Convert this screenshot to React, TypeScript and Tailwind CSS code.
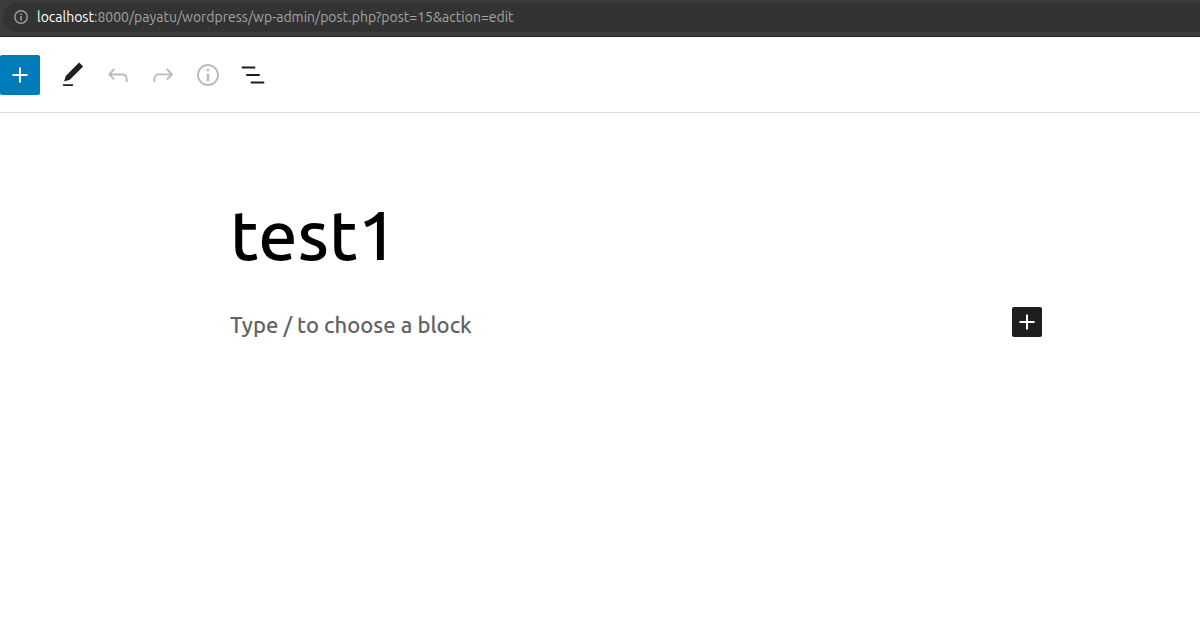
import type { ReactNode } from "react";

const PLUS = "M18 11.2h-5.2V6h-1.6v5.2H6v1.6h5.2V18h1.6v-5.2H18z";
const PENCIL =
  "M20.1 5.1L16.9 2 6.2 12.7l-1.3 4.4 4.5-1.3 10.7-10.7zM4 20.8h8v-1.5H4v1.5z";
const UNDO =
  "M18.3 11.7c-.6-.6-1.4-.9-2.3-.9H6.7l2.9-3.3-1.1-1-4.5 5L8.5 16l1-1-2.7-2.7H16c.5 0 .9.2 1.3.5 1 1 1 3.4 1 4.5v.3h1.5v-.2c0-1.5 0-4.3-1.5-5.7z";
const REDO =
  "M15.6 6.5l-1.1 1 2.9 3.3H8c-.9 0-1.7.3-2.3.9-1.4 1.5-1.4 4.2-1.4 5.6v.2h1.5v-.3c0-1.1 0-3.5 1-4.5.3-.3.7-.5 1.3-.5h9.2L14.5 15l1.1 1.1 4.6-4.6-4.6-5z";
const INFO =
  "M12 3.2c-4.8 0-8.8 3.9-8.8 8.8 0 4.8 3.9 8.8 8.8 8.8 4.8 0 8.8-3.9 8.8-8.8 0-4.8-4-8.8-8.8-8.8zm0 16c-4 0-7.2-3.3-7.2-7.2C4.8 8 8 4.8 12 4.8s7.2 3.3 7.2 7.2c0 4-3.2 7.2-7.2 7.2zM11 17h2v-6h-2v6zm0-8h2V7h-2v2z";
const LIST =
  "M13.8 5.2H3v1.5h10.8V5.2zm-3.6 12v1.5H21v-1.5H10.2zm7.2-6H6.6v1.5h10.8v-1.5z";

function Icon({ path }: { path: string }) {
  return (
    <svg viewBox="0 0 24 24" className="size-[30px]" fill="currentColor" aria-hidden="true">
      <path d={path} />
    </svg>
  );
}

function ToolButton({ label, disabled, children }: { label: string; disabled?: boolean; children: ReactNode }) {
  return (
    <button
      type="button"
      aria-label={label}
      disabled={disabled}
      className="flex h-10 w-[45px] items-center justify-center text-[#1e1e1e] disabled:text-[#bbbbbb]"
    >
      {children}
    </button>
  );
}

function AddressBar() {
  return (
    <div className="border-b border-[#202124] bg-[#3c3c3c] pt-0.5 pb-1 pl-[3px]">
      <div className="flex h-[30px] items-center gap-[9px] rounded-l-full bg-[#333333] pl-[11px]">
        <svg viewBox="0 0 14 14" className="size-3.5 shrink-0 text-[#9aa0a6]" aria-hidden="true">
          <circle cx="7" cy="7" r="6.2" fill="none" stroke="currentColor" strokeWidth="1.4" />
          <path d="M6.2 6h1.6v4.4H6.2zM6.2 3.4h1.6V5H6.2z" fill="currentColor" />
        </svg>
        <div
          role="textbox"
          aria-label="Address"
          contentEditable
          suppressContentEditableWarning
          spellCheck={false}
          className="text-sm whitespace-nowrap text-[#a4a4a4] outline-none"
        >
          <span className="text-white">localhost</span>:8000/payatu/wordpress/wp-admin/post.php?post=15&amp;action=edit
        </div>
      </div>
    </div>
  );
}

export default function App() {
  return (
    <div className="min-h-screen bg-white font-['Ubuntu','Noto_Sans',sans-serif]">
      <AddressBar />
      <header className="flex h-[76px] items-center border-b border-[#e0e0e0]">
        <button
          type="button"
          aria-label="Add block"
          className="mr-2.5 flex size-10 items-center justify-center rounded-xs bg-[#007cba] text-white"
        >
          <Icon path={PLUS} />
        </button>
        <ToolButton label="Tools"><Icon path={PENCIL} /></ToolButton>
        <ToolButton label="Undo" disabled><Icon path={UNDO} /></ToolButton>
        <ToolButton label="Redo" disabled><Icon path={REDO} /></ToolButton>
        <ToolButton label="Details" disabled><Icon path={INFO} /></ToolButton>
        <ToolButton label="List view"><Icon path={LIST} /></ToolButton>
      </header>
      <main className="pt-[77px] pr-[158px] pl-[230px]">
        <input
          aria-label="Title"
          defaultValue="test1"
          spellCheck={false}
          className="block h-[88px] w-full text-[70px] leading-[88px] font-medium text-black outline-none"
        />
        <div className="mt-[27px] flex items-start">
          <input
            aria-label="Block content"
            placeholder="Type / to choose a block"
            className="h-[38px] min-w-0 flex-1 text-[22px] font-medium text-[#1e1e1e] outline-none placeholder:text-[#626262]"
          />
          <button
            type="button"
            aria-label="Add block here"
            className="mt-0.5 flex size-[30px] items-center justify-center rounded-xs bg-[#1e1e1e] text-white"
          >
            <Icon path={PLUS} />
          </button>
        </div>
      </main>
    </div>
  );
}
